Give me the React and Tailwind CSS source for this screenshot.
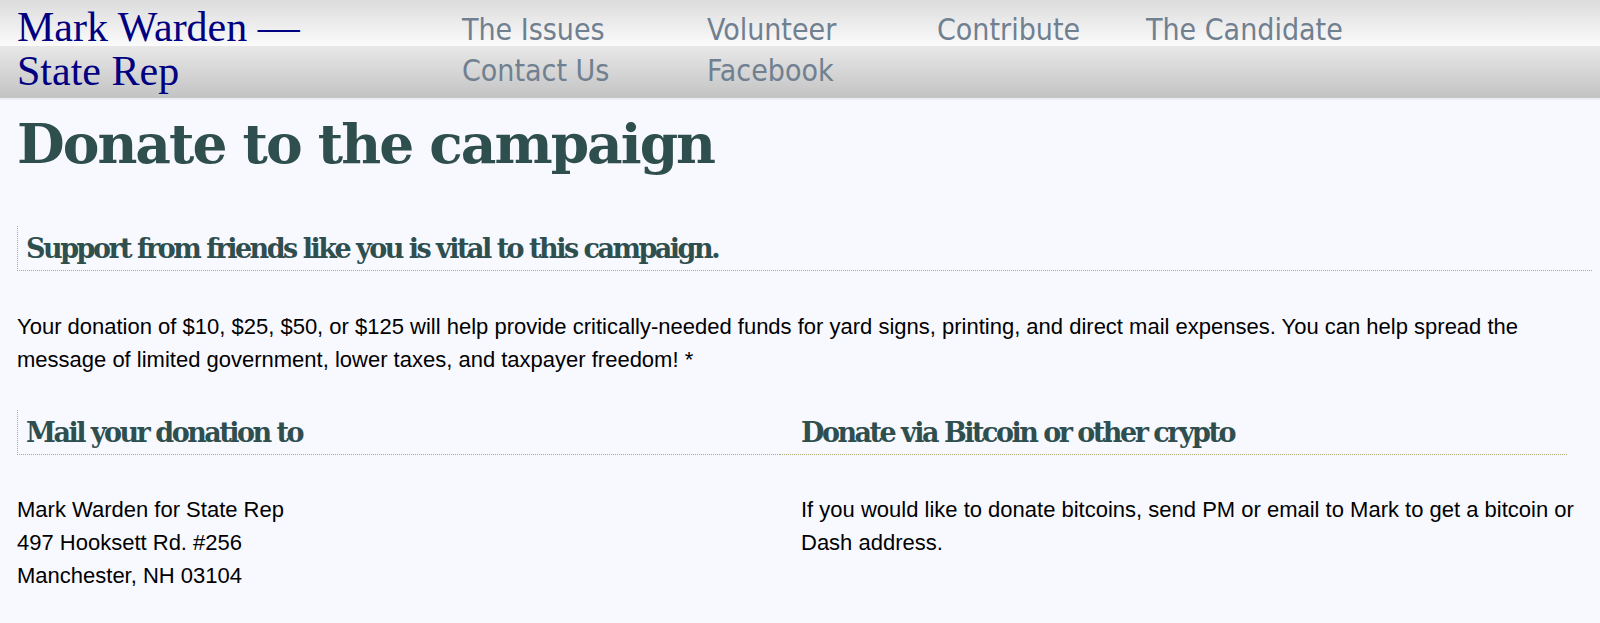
import React from "react";

const serifHead = { fontFamily: '"DejaVu Serif", serif' };

export default function App() {
  const navItems = ["The Issues", "Volunteer", "Contribute", "The Candidate", "Contact Us", "Facebook"];
  return (
    <div className="min-h-screen bg-[#f8f8ff] font-['Liberation_Sans',Arial,sans-serif] text-black">
      <header className="flex items-start h-[100px] bg-[linear-gradient(to_bottom,#dcdcdc_0px,#fbfbfb_46px,#e8e8e8_46px,#c3c3c3_98px)] border-b-2 border-[#ececf2]">
        <div className="w-[462px] shrink-0 pl-[17px] pt-[5px] font-['Liberation_Serif',serif] text-[42px] leading-[44px] text-[#000080]">
          Mark Warden —<br />State Rep
        </div>
        <nav className="grid content-start grid-cols-[245px_230px_209px_auto] pt-[9px] font-['DejaVu_Sans_Condensed','DejaVu_Sans',sans-serif] text-[30px] leading-[41px] text-[#708090]">
          {navItems.map((n) => (
            <a key={n} href="#" className="whitespace-nowrap">
              {n}
            </a>
          ))}
        </nav>
      </header>

      <main className="pl-[17px] pr-[8px]">
        <h1
          style={serifHead}
          className="mt-[16px] text-[55px] font-bold leading-[55px] tracking-[-2px] text-[#2f4f4f]"
        >
          Donate to the campaign
        </h1>

        <h2
          style={serifHead}
          className="mt-[55px] border-l border-b border-dotted border-[#adad78] pl-[8px] pt-[7px] pb-[5px] text-[27px] font-bold leading-[32px] tracking-[-2.5px] text-[#2f4f4f]"
        >
          Support from friends like you is vital to this campaign.
        </h2>

        <p className="mt-[39px] text-[22px] leading-[33px]">
          Your donation of $10, $25, $50, or $125 will help provide critically-needed funds for yard signs, printing, and direct mail expenses. You can help spread the message of limited government, lower taxes, and taxpayer freedom! *
        </p>

        <div className="mt-[34px] grid grid-cols-[763px_1fr]">
          <div>
            <h2
              style={serifHead}
              className="border-l border-b border-dotted border-[#adad78] pl-[8px] pt-[7px] pb-[5px] text-[27px] font-bold leading-[32px] tracking-[-2.5px] text-[#2f4f4f]"
            >
              Mail your donation to
            </h2>
            <p className="mt-[38px] text-[22px] leading-[33px]">
              Mark Warden for State Rep
              <br />
              497 Hooksett Rd. #256
              <br />
              Manchester, NH 03104
            </p>
          </div>
          <div>
            <h2
              style={serifHead}
              className="mr-[25px] border-b border-dotted border-[#adad78] pl-[21px] pt-[7px] pb-[5px] text-[27px] font-bold leading-[32px] tracking-[-2.5px] text-[#2f4f4f]"
            >
              Donate via Bitcoin or other crypto
            </h2>
            <p className="mt-[38px] pl-[21px] text-[22px] leading-[33px]">
              If you would like to donate bitcoins, send PM or email to Mark to get a bitcoin or Dash address.
            </p>
          </div>
        </div>
      </main>
    </div>
  );
}
